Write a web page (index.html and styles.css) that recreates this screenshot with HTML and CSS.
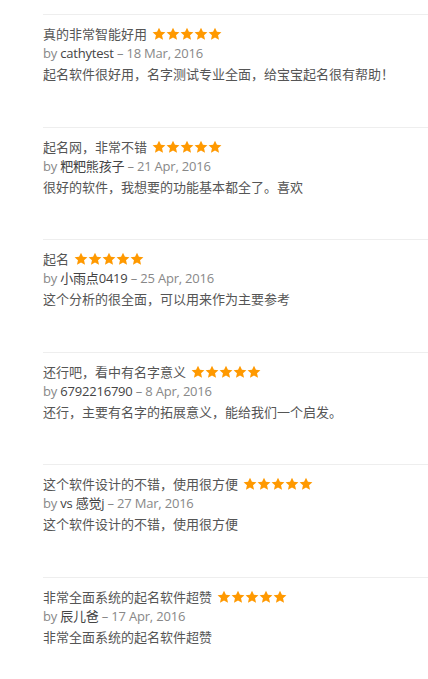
FILE: index.html
```html
<!DOCTYPE html>
<html lang="zh">
<head>
<meta charset="utf-8">
<title>Reviews</title>
<link rel="stylesheet" href="styles.css">
</head>
<body>
<svg width="0" height="0" class="defs" aria-hidden="true">
  <defs>
    <symbol id="star" viewBox="0 0 24 24">
      <path d="M12 1.2l3.3 7.1 7.7.8-5.8 5.2 1.7 7.6L12 18l-6.9 3.9 1.7-7.6L1 9.1l7.7-.8z"/>
    </symbol>
  </defs>
</svg>
<div class="reviews">
  <div class="review">
    <div class="title">真的非常智能好用 <span class="stars"><svg><use href="#star"/></svg><svg><use href="#star"/></svg><svg><use href="#star"/></svg><svg><use href="#star"/></svg><svg><use href="#star"/></svg></span></div>
    <div class="byline">by <span class="name">cathytest</span> – 18 Mar, 2016</div>
    <p class="text">起名软件很好用，名字测试专业全面，给宝宝起名很有帮助！</p>
  </div>
  <div class="review">
    <div class="title">起名网，非常不错 <span class="stars"><svg><use href="#star"/></svg><svg><use href="#star"/></svg><svg><use href="#star"/></svg><svg><use href="#star"/></svg><svg><use href="#star"/></svg></span></div>
    <div class="byline">by <span class="name">粑粑熊孩子</span> – 21 Apr, 2016</div>
    <p class="text">很好的软件，我想要的功能基本都全了。喜欢</p>
  </div>
  <div class="review">
    <div class="title">起名 <span class="stars"><svg><use href="#star"/></svg><svg><use href="#star"/></svg><svg><use href="#star"/></svg><svg><use href="#star"/></svg><svg><use href="#star"/></svg></span></div>
    <div class="byline">by <span class="name">小雨点0419</span> – 25 Apr, 2016</div>
    <p class="text">这个分析的很全面，可以用来作为主要参考</p>
  </div>
  <div class="review">
    <div class="title">还行吧，看中有名字意义 <span class="stars"><svg><use href="#star"/></svg><svg><use href="#star"/></svg><svg><use href="#star"/></svg><svg><use href="#star"/></svg><svg><use href="#star"/></svg></span></div>
    <div class="byline">by <span class="name">6792216790</span> – 8 Apr, 2016</div>
    <p class="text">还行，主要有名字的拓展意义，能给我们一个启发。</p>
  </div>
  <div class="review">
    <div class="title">这个软件设计的不错，使用很方便 <span class="stars"><svg><use href="#star"/></svg><svg><use href="#star"/></svg><svg><use href="#star"/></svg><svg><use href="#star"/></svg><svg><use href="#star"/></svg></span></div>
    <div class="byline">by <span class="name">vs 感觉j</span> – 27 Mar, 2016</div>
    <p class="text">这个软件设计的不错，使用很方便</p>
  </div>
  <div class="review">
    <div class="title">非常全面系统的起名软件超赞 <span class="stars"><svg><use href="#star"/></svg><svg><use href="#star"/></svg><svg><use href="#star"/></svg><svg><use href="#star"/></svg><svg><use href="#star"/></svg></span></div>
    <div class="byline">by <span class="name">辰儿爸</span> – 17 Apr, 2016</div>
    <p class="text">非常全面系统的起名软件超赞</p>
  </div>
</div>
</body>
</html>
```

FILE: styles.css
```css
html, body {
  margin: 0;
  padding: 0;
  background: #fff;
}
body {
  font-family: "Open Sans", "Noto Sans CJK SC", sans-serif;
  font-size: 13px;
  color: #555;
}
.defs {
  position: absolute;
  width: 0;
  height: 0;
  overflow: hidden;
}
.reviews {
  padding: 14px 0 0 43px;
}
.review {
  border-top: 1px solid #eee;
  padding: 10px 0 42.5px;
}
.title {
  line-height: 19px;
  height: 19px;
  white-space: nowrap;
  color: #555;
}
.stars {
  display: inline-flex;
  gap: 0;
  margin-left: 1.5px;
  vertical-align: -2px;
}
.stars svg {
  width: 14px;
  height: 14px;
  fill: #f90;
}
.byline {
  line-height: 18px;
  height: 18px;
  color: #888;
  letter-spacing: -0.2px;
}
.byline .name {
  color: #444;
}
.text {
  margin: 2px 0 0;
  line-height: 20px;
  color: #555;
}
```
